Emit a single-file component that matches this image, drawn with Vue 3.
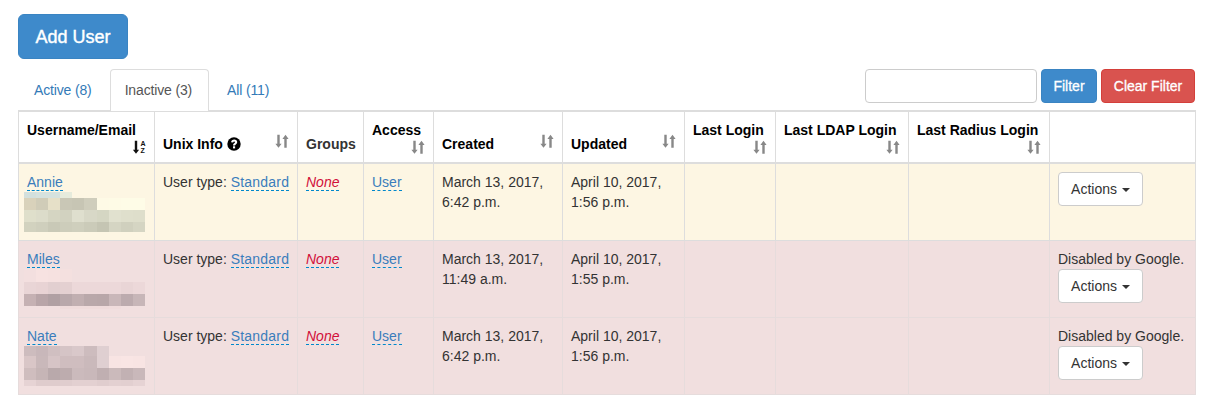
<script setup>
const headers = [
  { label: 'Username/Email', cls: 'c1', icon: 'alpha' },
  { label: 'Unix Info', cls: 'c2', icon: 'sort', help: true },
  { label: 'Groups', cls: 'c3 muted' },
  { label: 'Access', cls: 'c4', icon: 'sort' },
  { label: 'Created', cls: 'c5', icon: 'sort' },
  { label: 'Updated', cls: 'c6', icon: 'sort' },
  { label: 'Last Login', cls: 'c7', icon: 'sort' },
  { label: 'Last LDAP Login', cls: 'c8', icon: 'sort' },
  { label: 'Last Radius Login', cls: 'c9', icon: 'sort' },
  { label: '', cls: 'c10' },
]

const rows = [
  {
    name: 'Annie', kind: 'warning', created: ['March 13, 2017,', '6:42 p.m.'], updated: ['April 10, 2017,', '1:56 p.m.'], disabled: false,
    heights: '6px 12px 12px 10px',
    blur: [
      ['#d3e0dd', '#d6e2de', '#d6e2de', '#e6ebdc', '#fdf6e3', '#fdf6e3', '#fdf6e3', '#fdf6e3', '#fdf6e3', '#fdf6e3'],
      ['#d9d2bb', '#d0ccb8', '#e6e0c8', '#c9c7b6', '#c7c5b4', '#cfcdbc', '#fefae6', '#fefbe6', '#fefce7', '#fefce7'],
      ['#dfdfcb', '#dcdcca', '#d5d5c2', '#d2d2c0', '#dfdfce', '#d8d8c7', '#d5d6c3', '#e1e1cf', '#dfdfcc', '#dedecb'],
      ['#d2d2bf', '#cfcfbd', '#c9c9b7', '#cdcdbb', '#cfcfbd', '#cbcbb9', '#c5c5b3', '#d5d5c3', '#d0d0be', '#d5d5c3'],
    ],
  },
  {
    name: 'Miles', kind: 'danger', created: ['March 13, 2017,', '11:49 a.m.'], updated: ['April 10, 2017,', '1:55 p.m.'], disabled: true,
    heights: '13px 12px 12px 3px',
    blur: [
      ['#f3dfdf', '#f7e2e1', '#f6e1e0', '#f4e0df', '#f1dfdf', '#f1dfdf', '#f1dfdf', '#f1dfdf', '#f1dfdf', '#f1dfdf'],
      ['#e9d5d6', '#e8d3d4', '#e2cfd0', '#e4d0d1', '#ecd8d9', '#ecd8d9', '#ecd8d9', '#ecd8d9', '#e9d5d6', '#ecd8d9'],
      ['#c5b1b3', '#b8a5a8', '#b0a0a3', '#b9a8ab', '#c1afb1', '#b9a8aa', '#b8a7a9', '#c9b7b9', '#bcabae', '#c7b6b8'],
      ['#f1dfdf', '#f1dfdf', '#f1dfdf', '#efdbdb', '#efdbdb', '#efdbdb', '#efdbdb', '#f0dcdc', '#f1dfdf', '#f1dfdf'],
    ],
  },
  {
    name: 'Nate', kind: 'danger', created: ['March 13, 2017,', '6:42 p.m.'], updated: ['April 10, 2017,', '1:56 p.m.'], disabled: true,
    heights: '10px 12px 12px 6px',
    blur: [
      ['#cdbcbe', '#c8b7ba', '#d0bfc1', '#d5c4c6', '#d9c8ca', '#cdbcbe', '#dfcfd1', '#f1dfdf', '#f1dfdf', '#f1dfdf'],
      ['#d9c6c7', '#c9b8ba', '#d6c4c6', '#cfbdbf', '#cfbdbf', '#cab9bb', '#dfcfd1', '#f8e4e3', '#f9e5e4', '#f8e4e3'],
      ['#cfbdbe', '#c6b5b6', '#b9a9ab', '#bdacae', '#cbbabc', '#c9b8ba', '#c0afb1', '#cbbabb', '#c2b1b3', '#c9b8ba'],
      ['#e6d3d4', '#dfcccd', '#dfcccd', '#e0cdce', '#e3d0d1', '#e3d0d1', '#e0cdce', '#e3d0d1', '#e2cfd0', '#e6d3d4'],
    ],
  },
]
</script>

<template>
  <div class="page">
    <button class="btn btn-lg primary">Add User</button>

    <div class="toolbar">
      <ul class="tabs">
        <li><a>Active (8)</a></li>
        <li class="active"><a>Inactive (3)</a></li>
        <li><a>All (11)</a></li>
      </ul>
      <form class="filter" @submit.prevent>
        <input class="filter-input" type="text" />
        <button class="btn primary">Filter</button>
        <button class="btn red">Clear Filter</button>
      </form>
    </div>

    <table class="users">
      <colgroup>
        <col class="w1" /><col class="w2" /><col class="w3" /><col class="w4" /><col class="w5" />
        <col class="w6" /><col class="w7" /><col class="w8" /><col class="w9" /><col class="w10" />
      </colgroup>
      <thead>
        <tr>
          <th v-for="h in headers" :key="h.cls" :class="h.cls">
            {{ h.label }}
            <svg v-if="h.help" class="help" viewBox="0 0 14 14" width="14" height="14">
              <circle cx="7" cy="7" r="6.7" fill="#000" />
              <path d="M4.100 5.300C4.300 3.500 5.500 2.500 7.200 2.500c1.800 0 3 1.100 3 2.600 0 1.200-.7 1.800-1.400 2.300-.5.300-.7.600-.7 1.100H6c0-1.200.4-1.800 1.200-2.300.6-.4.800-.6.800-1 0-.4-.3-.7-.8-.7-.6 0-1 .4-1.100 1z" fill="#fff" />
              <rect x="6" y="9.300" width="2.100" height="2.100" fill="#fff" />
            </svg>
            <svg v-if="h.icon === 'sort'" class="sort" viewBox="0 0 14 14" width="14" height="14">
              <path d="M2.300 .8h2.400v8.900h1.900L3.500 13.800.4 9.700h1.900z" fill="#888" />
              <path d="M9.300 13.800h2.400V4.900h1.900L10.500 .8 7.400 4.900h1.900z" fill="#888" />
            </svg>
            <svg v-if="h.icon === 'alpha'" class="sort" viewBox="0 0 14 14" width="14" height="14">
              <path d="M2.800 .8h2.400v8.900h1.900L4 13.800.9 9.700h1.900z" fill="#111" />
              <text x="8.600" y="5.800" class="tiny">A</text>
              <text x="8.600" y="13.400" class="tiny">Z</text>
            </svg>
          </th>
        </tr>
      </thead>
      <tbody>
        <tr v-for="r in rows" :key="r.name" :class="r.kind">
          <td>
            <a class="editable">{{ r.name }}</a>
            <div class="blur" :style="{ gridTemplateRows: r.heights }">
              <template v-for="(line, i) in r.blur" :key="i">
                <i v-for="(c, j) in line" :key="j" :style="{ background: c }"></i>
              </template>
            </div>
          </td>
          <td class="nowrap">User type: <a class="editable std">Standard</a></td>
          <td><a class="editable empty">None</a></td>
          <td><a class="editable">User</a></td>
          <td>{{ r.created[0] }}<br />{{ r.created[1] }}</td>
          <td>{{ r.updated[0] }}<br />{{ r.updated[1] }}</td>
          <td></td>
          <td></td>
          <td></td>
          <td>
            <div v-if="r.disabled">Disabled by Google.</div>
            <button class="btn plain">Actions <span class="caret"></span></button>
          </td>
        </tr>
      </tbody>
    </table>
  </div>
</template>

<style scoped>
.page {
  width: 1177px;
  padding: 14px 13px 0 18px;
  font-family: "Liberation Sans", Arial, sans-serif;
  font-size: 14px;
  line-height: 20px;
  color: #333;
}
.btn {
  display: inline-block;
  box-sizing: border-box;
  height: 34px;
  padding: 6px 12px;
  font: inherit;
  border: 1px solid transparent;
  border-radius: 4px;
  color: #fff;
}
.btn-lg {
  display: block;
  height: 45px;
  width: 110px;
  padding: 10px 16px;
  font-size: 18px;
  line-height: 24px;
  border-radius: 6px;
  -webkit-text-stroke: 0.4px #fff;
}
.primary { background: #3e8acb; border-color: #3a84c2; }
.red { background: #d9534f; border-color: #d43f3a; }
.filter .btn { -webkit-text-stroke: 0.3px #fff; }
.plain { width: 85px; padding: 6px 0; background: #fff; border-color: #ccc; color: #333; }
.toolbar {
  display: flex;
  justify-content: space-between;
  align-items: flex-start;
  margin-top: 10px;
  height: 42px;
}
.tabs {
  display: flex;
  list-style: none;
  margin: 0;
  padding: 0;
  letter-spacing: -0.15px;
}
.tabs li { margin-right: 2px; }
.tabs li:nth-child(2) { margin-left: 1px; }
.tabs a {
  display: block;
  padding: 10px 15px;
  height: 20px;
  margin-top: 1px;
  color: #337ab7;
  border-radius: 4px 4px 0 0;
}
.tabs li:first-child a,
.tabs li:nth-child(3) a { padding-left: 16px; }
.tabs .active a {
  margin-top: 0;
  padding-left: 14px;
  padding-right: 16px;
  height: 21px;
  color: #555;
  background: #fff;
  border: 1px solid #ddd;
  border-bottom: 0;
}
.filter { display: flex; gap: 4px; }
.filter-input {
  box-sizing: border-box;
  width: 172px;
  height: 34px;
  border: 1px solid #ccc;
  border-radius: 4px;
  background: #fff;
  padding: 6px 12px;
}
.filter .primary { width: 56px; padding: 6px 0; }
.filter .red { width: 94px; padding: 6px 0; }
.users {
  table-layout: fixed;
  width: 1177px;
  border-collapse: collapse;
  border: 1px solid #ddd;
  box-shadow: 0 -1px 0 #ddd;
}
.w1 { width: 136px; }
.w2 { width: 143px; }
.w3 { width: 66px; }
.w4 { width: 70px; }
.w5 { width: 129px; }
.w6 { width: 122px; }
.w7 { width: 91px; }
.w8 { width: 133px; }
.w9 { width: 141px; }
.w10 { width: 146px; }
th {
  padding: 8px;
  text-align: left;
  vertical-align: bottom;
  font-weight: 700;
  color: #000;
  border: 1px solid #ddd;
  border-bottom: 2px solid #ddd;
}
th.muted { color: #333; }
td {
  padding: 8px;
  vertical-align: top;
  border: 1px solid #ddd;
}
.nowrap { white-space: nowrap; }
.warning td { background: #fdf6e3; }
.danger td { background: #f1dfdf; border-color: #e6dcdc; }
.sort {
  float: right;
  margin-left: 8px;
  display: block;
}
.tiny {
  font-size: 7px;
  font-weight: 700;
  fill: #111;
}
.help {
  display: inline-block;
  vertical-align: -2px;
}
.editable {
  color: #3a7dbc;
  border-bottom: 1px dashed #08c;
}
.std { letter-spacing: 0.2px; }
.empty {
  color: #d10f3a;
  font-style: italic;
}
.blur {
  display: grid;
  grid-template-columns: repeat(10, 12.1px);
  margin-left: -3px;
}
.caret {
  display: inline-block;
  width: 0;
  height: 0;
  margin-left: 1px;
  vertical-align: middle;
  border-top: 4px solid #333;
  border-left: 4px solid transparent;
  border-right: 4px solid transparent;
}
</style>
